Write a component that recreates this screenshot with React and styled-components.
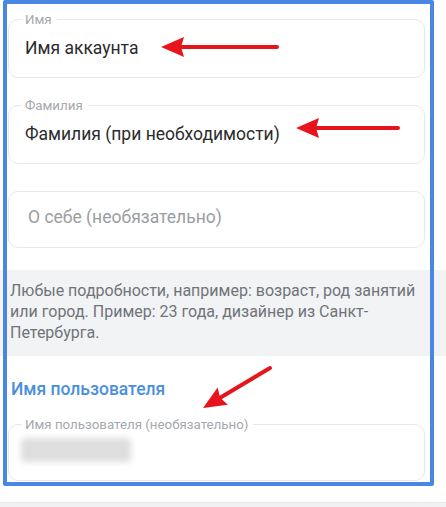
import React from 'react';
import styled, {createGlobalStyle} from 'styled-components';

const GlobalStyle = createGlobalStyle`
  html, body {
    margin: 0;
    padding: 0;
    background: #ffffff;
  }
  body {
    font-family: Roboto, "Noto Sans", "Liberation Sans", sans-serif;
    -webkit-font-smoothing: antialiased;
  }
`;

const Page = styled.div`
  position: relative;
  width: 446px;
  height: 507px;
  overflow: hidden;
  background: #fff;
  display: flex;
  flex-direction: column;
`;

const Form = styled.div`
  display: flex;
  flex-direction: column;
  padding: ${p => p.$pad || '0 21px 0 8px'};
`;

const Field = styled.fieldset`
  margin: ${p => p.$mt || 0}px 0 0;
  padding: 10px 13px 18px;
  border: 1px solid #e7e8ec;
  border-radius: 10px;
  min-width: 0;
`;

const Legend = styled.legend`
  padding: 0 5px 0 3px;
  font-size: 13.3px;
  line-height: 15px;
  color: #a5a8ad;
`;

const Value = styled.div`
  padding-left: 3px;
  font-size: 17.5px;
  line-height: 22px;
  color: ${p => (p.$placeholder ? '#9a9da2' : '#2a2b2d')};
`;

const PlainBox = styled.div`
  margin-top: ${p => p.$mt || 0}px;
  padding: 14px 16px 19px;
  border: 1px solid #e7e8ec;
  border-radius: 10px;
`;

const Hint = styled.div`
  margin-top: 22px;
  padding: 10px 30px 13px 10px;
  background: #f2f3f5;
  font-size: 16px;
  line-height: 21px;
  color: #707479;
`;

const SectionTitle = styled.div`
  margin-top: 22px;
  padding-left: 11px;
  font-size: 17.5px;
  font-weight: 500;
  line-height: 22px;
  color: #4b8fdc;
`;

const Blurred = styled.div`
  width: 110px;
  height: 24px;
  margin-left: -1px;
  margin-top: -4px;
  border-radius: 3px;
  background: #dedede;
  filter: blur(3px);
`;

const BottomStrip = styled.div`
  margin-top: auto;
  height: 4px;
  background: #f0f0f2;
  border-top: 1px solid #e9e9ec;
`;

// annotation layer: highlight frame + red arrows drawn over the form
const Frame = styled.div`
  position: absolute;
  left: 3px;
  top: 0;
  width: 431px;
  height: 486px;
  box-sizing: border-box;
  border: 4px solid #4a87e3;
  border-radius: 2px;
  pointer-events: none;
`;

const Overlay = styled.svg`
  position: absolute;
  left: 0;
  top: 0;
  pointer-events: none;
`;

const Arrow = ({from, to, color = '#e8141c'}) => {
  const [x1, y1] = from;
  const [x2, y2] = to;
  const len = Math.hypot(x2 - x1, y2 - y1);
  const ux = (x2 - x1) / len;
  const uy = (y2 - y1) / len;
  const head = 23;
  const half = 10;
  const bx = x2 - ux * head;
  const by = y2 - uy * head;
  const pts = [
    [x2, y2],
    [bx - uy * half, by + ux * half],
    [bx + ux * 3, by + uy * 3],
    [bx + uy * half, by - ux * half],
  ].map(p => p.join(',')).join(' ');
  return (
    <g>
      <line x1={x1} y1={y1} x2={bx + ux * 4} y2={by + uy * 4} stroke={color} strokeWidth="4" strokeLinecap="round" />
      <polygon points={pts} fill={color} />
    </g>
  );
};

export default function App() {
  return (
    <>
      <GlobalStyle />
      <Page>
        <Form $pad="12px 21px 0 8px">
          <Field>
            <Legend>Имя</Legend>
            <Value>Имя аккаунта</Value>
          </Field>
          <Field $mt={20}>
            <Legend>Фамилия</Legend>
            <Value>Фамилия (при необходимости)</Value>
          </Field>
          <PlainBox $mt={27}>
            <Value $placeholder>О себе (необязательно)</Value>
          </PlainBox>
        </Form>
        <Hint>
          Любые подробности, например: возраст, род занятий или город. Пример: 23 года, дизайнер из Санкт-Петербурга.
        </Hint>
        <SectionTitle>Имя пользователя</SectionTitle>
        <Form>
          <Field $mt={17}>
            <Legend>Имя пользователя (необязательно)</Legend>
            <Blurred />
          </Field>
        </Form>
        <BottomStrip />
        <Frame />
        <Overlay width="446" height="507" viewBox="0 0 446 507">
          <Arrow from={[277, 47]} to={[161, 47]} />
          <Arrow from={[398, 128]} to={[296, 128]} />
          <Arrow from={[270, 368]} to={[203, 408]} />
        </Overlay>
      </Page>
    </>
  );
}
